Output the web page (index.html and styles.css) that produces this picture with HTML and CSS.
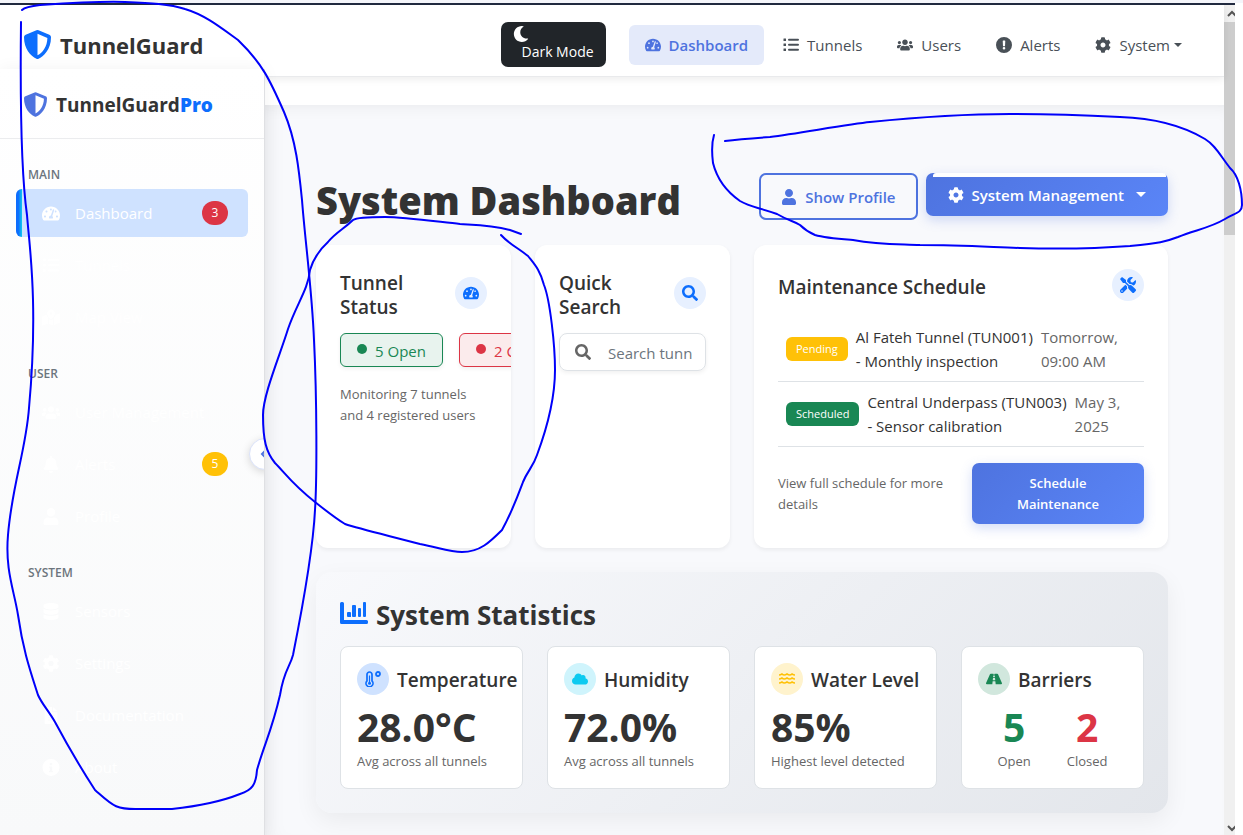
FILE: index.html
```html
<!DOCTYPE html>
<html lang="en">
<head>
<meta charset="utf-8">
<meta name="viewport" content="width=device-width, initial-scale=1">
<title>TunnelGuard</title>
<link rel="stylesheet" href="styles.css">
</head>
<body>
<svg class="sprite" aria-hidden="true">
  <symbol id="shield" viewBox="16 0 480 512"><path d="M466.500 83.700l-192-80a48.150 48.150 0 0 0-36.900 0l-192 80C27.700 91.100 16 108.600 16 128c0 198.500 114.500 335.700 221.500 380.300 11.800 4.900 25.100 4.900 36.900 0C360.100 472.600 496 349.300 496 128c0-19.400-11.700-36.900-29.500-44.300zM256.100 446.300l-.1-381 175.900 73.300c-3.300 151.400-82.100 261.100-175.800 307.700z"/></symbol>
  <symbol id="gauge" viewBox="0 0 576 512"><path d="M288 32C128.940 32 0 160.940 0 320c0 52.800 14.250 102.260 39.060 144.800 5.610 9.620 16.300 15.200 27.440 15.200h443c11.140 0 21.830-5.580 27.440-15.200C561.750 422.260 576 372.800 576 320c0-159.060-128.940-288-288-288zm0 64c14.710 0 26.580 10.130 30.320 23.650-1.110 2.260-2.640 4.230-3.450 6.670l-9.220 27.670c-5.130 3.490-10.970 6.010-17.640 6.010-17.670 0-32-14.330-32-32S270.330 96 288 96zM96 384c-17.670 0-32-14.330-32-32s14.330-32 32-32 32 14.330 32 32-14.330 32-32 32zm48-160c-17.670 0-32-14.330-32-32s14.330-32 32-32 32 14.330 32 32-14.330 32-32 32zm246.770-72.410l-61.330 184C343.130 347.330 352 364.540 352 384c0 11.720-3.380 22.550-8.880 32H232.880c-5.500-9.450-8.880-20.280-8.880-32 0-33.940 26.500-61.430 59.900-63.590l61.340-184.010c4.170-12.560 17.730-19.450 30.360-15.170 12.570 4.190 19.350 17.790 15.170 30.360zm14.660 57.200l15.520-46.550c3.470-1.290 7.130-2.230 11.050-2.230 17.670 0 32 14.330 32 32s-14.330 32-32 32c-11.380-.01-21.380-6.100-27.150-15.220zM480 384c-17.670 0-32-14.330-32-32s14.330-32 32-32 32 14.330 32 32-14.330 32-32 32z"/></symbol>
  <symbol id="list" viewBox="0 0 512 512"><path d="M24 48h64q8 0 8 8v64q0 8-8 8H24q-8 0-8-8V56q0-8 8-8zM24 208h64q8 0 8 8v64q0 8-8 8H24q-8 0-8-8v-64q0-8 8-8zM24 368h64q8 0 8 8v64q0 8-8 8H24q-8 0-8-8v-64q0-8 8-8zM192 56h288a32 32 0 0 1 0 64H192a32 32 0 0 1 0-64zM192 216h288a32 32 0 0 1 0 64H192a32 32 0 0 1 0-64zM192 376h288a32 32 0 0 1 0 64H192a32 32 0 0 1 0-64z"/></symbol>
  <symbol id="users" viewBox="0 0 640 512"><path d="M96 224c35.300 0 64-28.700 64-64s-28.700-64-64-64-64 28.700-64 64 28.700 64 64 64zm448 0c35.300 0 64-28.700 64-64s-28.700-64-64-64-64 28.700-64 64 28.700 64 64 64zm32 32h-64c-17.600 0-33.500 7.100-45.100 18.600 40.300 22.100 68.900 62 75.100 109.400h66c17.700 0 32-14.300 32-32v-32c0-35.300-28.700-64-64-64zm-256 0c61.900 0 112-50.100 112-112S381.900 32 320 32 208 82.100 208 144s50.100 112 112 112zm76.800 32h-8.300c-20.800 10-43.900 16-68.500 16s-47.600-6-68.500-16h-8.300C179.600 288 128 339.600 128 403.200V432c0 26.500 21.500 48 48 48h288c26.500 0 48-21.500 48-48v-28.800c0-63.600-51.600-115.200-115.200-115.200zm-223.700-13.400C161.500 263.100 145.600 256 128 256H64c-35.300 0-64 28.700-64 64v32c0 17.700 14.300 32 32 32h65.900c6.300-47.400 34.900-87.300 75.200-109.400z"/></symbol>
  <symbol id="alert" viewBox="0 0 512 512"><path fill-rule="evenodd" d="M256 0a256 256 0 1 0 0 512a256 256 0 0 0 0-512zM232 112h48q18 0 17 18l-8 146q-1 16-16 16h-34q-15 0-16-16l-8-146q-1-18 17-18zM256 318a42 42 0 1 1 0 84a42 42 0 0 1 0-84z"/></symbol>
  <symbol id="info" viewBox="0 0 512 512"><path fill-rule="evenodd" d="M256 0a256 256 0 1 0 0 512a256 256 0 0 0 0-512zM256 110a42 42 0 1 1 0 84a42 42 0 0 1 0-84zM204 224h88v136h28v40H192v-40h28v-96h-16z"/></symbol>
  <symbol id="gear" viewBox="0 0 512 512"><path d="M487.400 315.700l-42.600-24.600c4.300-23.200 4.300-47 0-70.200l42.600-24.600c4.900-2.800 7.100-8.600 5.500-14-11.100-35.600-30-67.800-54.700-94.600-3.800-4.100-10-5.100-14.800-2.300L380.800 110c-17.900-15.400-38.500-27.300-60.800-35.100V25.800c0-5.600-3.900-10.500-9.400-11.700-36.700-8.200-74.300-7.800-109.200 0-5.500 1.200-9.400 6.100-9.400 11.700V75c-22.200 7.900-42.800 19.800-60.800 35.100L88.700 85.500c-4.900-2.800-11-1.900-14.800 2.300-24.700 26.700-43.600 58.900-54.700 94.600-1.700 5.400.6 11.200 5.500 14L67.300 221c-4.300 23.200-4.300 47 0 70.200l-42.600 24.600c-4.900 2.800-7.100 8.600-5.500 14 11.100 35.600 30 67.800 54.700 94.600 3.800 4.100 10 5.100 14.800 2.300l42.600-24.600c17.900 15.400 38.500 27.300 60.800 35.100v49.200c0 5.600 3.900 10.500 9.400 11.700 36.700 8.200 74.300 7.800 109.200 0 5.500-1.200 9.400-6.100 9.400-11.700v-49.200c22.200-7.900 42.800-19.800 60.800-35.100l42.600 24.600c4.900 2.800 11 1.900 14.800-2.300 24.700-26.700 43.600-58.900 54.700-94.600 1.500-5.500-.7-11.300-5.600-14.100zM256 336c-44.100 0-80-35.900-80-80s35.900-80 80-80 80 35.900 80 80-35.900 80-80 80z"/></symbol>
  <symbol id="moon" viewBox="0 0 512 512"><path d="M283.211 512c78.962 0 151.079-35.925 198.857-94.792 7.068-8.708-.639-21.430-11.562-19.350-124.203 23.654-238.262-71.576-238.262-196.954 0-72.222 38.662-138.635 101.498-174.394 9.686-5.512 7.250-20.197-3.756-22.230A258.156 258.156 0 0 0 283.211 0c-141.309 0-256 114.511-256 256 0 141.309 114.511 256 256 256z"/></symbol>
  <symbol id="user" viewBox="0 0 448 512"><path d="M224 256c70.700 0 128-57.300 128-128S294.700 0 224 0 96 57.300 96 128s57.300 128 128 128zm89.600 32h-16.700c-22.200 10.200-46.900 16-72.900 16s-50.600-5.800-72.900-16h-16.700C60.200 288 0 348.200 0 422.400V464c0 26.500 21.500 48 48 48h352c26.500 0 48-21.500 48-48v-41.600c0-74.200-60.200-134.400-134.400-134.400z"/></symbol>
  <symbol id="search" viewBox="0 0 512 512"><path d="M505 442.700L405.300 343c-4.500-4.500-10.600-7-17-7H372c27.600-35.300 44-79.700 44-128C416 93.100 322.900 0 208 0S0 93.100 0 208s93.100 208 208 208c48.300 0 92.700-16.400 128-44v16.300c0 6.400 2.500 12.500 7 17l99.700 99.700c9.400 9.400 24.600 9.400 33.900 0l28.300-28.300c9.400-9.400 9.400-24.600.1-34zM208 336c-70.700 0-128-57.200-128-128 0-70.700 57.200-128 128-128 70.700 0 128 57.200 128 128 0 70.700-57.200 128-128 128z"/></symbol>
  <symbol id="tools" viewBox="0 0 512 512"><path d="M501.100 395.700L384 278.600c-23.100-23.100-57.600-27.600-85.400-13.900L192 158.100V96L64 0 0 64l96 128h62.100l106.600 106.600c-13.600 27.800-9.200 62.300 13.900 85.400l117.100 117.100c14.600 14.600 38.200 14.600 52.700 0l52.700-52.700c14.500-14.600 14.500-38.200 0-52.700zM331.700 225c28.300 0 54.900 11 74.900 31l19.400 19.400c15.800-6.900 30.800-16.500 43.800-29.500 37.100-37.100 49.700-89.300 37.900-136.700-2.200-9-13.500-12.100-20.100-5.500l-74.400 74.400-67.900-11.300L334 98.900l74.400-74.400c6.600-6.600 3.400-17.900-5.700-20.200-47.400-11.700-99.600.9-136.600 37.900-28.500 28.500-41.900 66.100-41.200 103.600l82.100 82.100c8.100-1.900 16.500-2.900 24.700-2.900zm-103.900 82l-56.700-56.700L18.700 402.800c-25 25-25 65.500 0 90.500s65.500 25 90.500 0l123.600-123.600c-7.600-19.900-9.900-41.600-5-62.700zM64 472c-13.200 0-24-10.800-24-24 0-13.300 10.700-24 24-24s24 10.700 24 24c0 13.200-10.700 24-24 24z"/></symbol>
  <symbol id="map" viewBox="0 0 576 512"><path fill-rule="evenodd" d="M288 0c-70 0-126 56-126 126 0 56 82 158 113 190a18 18 0 0 0 26 0c31-32 113-134 113-190C414 56 358 0 288 0zm0 84a42 42 0 1 1 0 84a42 42 0 0 1 0-84zM20 216L144 166q20 60 48 100v188L20 510Q0 514 0 494V244q0-20 20-28zM224 310q64 70 128 0v202L224 464zM384 268q40-60 50-90l122-48q20-6 20 16v252q0 18-16 26L384 494z"/></symbol>
  <symbol id="bell" viewBox="0 0 448 512"><path d="M224 512c35.320 0 63.970-28.650 63.970-64H160.030c0 35.350 28.650 64 63.970 64zm215.390-149.710c-19.320-20.760-55.470-51.990-55.470-154.290 0-77.700-54.480-139.900-127.940-155.160V32c0-17.670-14.320-32-31.980-32s-31.980 14.330-31.980 32v20.840C118.560 68.100 64.080 130.300 64.080 208c0 102.300-36.150 133.530-55.470 154.290-6 6.450-8.660 14.160-8.610 21.710.11 16.400 12.980 32 32.100 32h383.800c19.120 0 32-15.600 32.100-32 .05-7.550-2.610-15.270-8.610-21.710z"/></symbol>
  <symbol id="database" viewBox="0 0 448 512"><path d="M448 73.143v45.714C448 159.143 347.667 192 224 192S0 159.143 0 118.857V73.143C0 32.857 100.333 0 224 0s224 32.857 224 73.143zM448 176v102.857C448 319.143 347.667 352 224 352S0 319.143 0 278.857V176c48.125 33.143 136.208 48.572 224 48.572S399.874 209.143 448 176zm0 160v102.857C448 479.143 347.667 512 224 512S0 479.143 0 438.857V336c48.125 33.143 136.208 48.572 224 48.572S399.874 369.143 448 336z"/></symbol>
  <symbol id="file" viewBox="0 0 384 512"><path fill-rule="evenodd" d="M24 0h200v136q0 24 24 24h136v328q0 24-24 24H24q-24 0-24-24V24Q0 0 24 0zM256 0l128 128H256zM96 240v30h192v-30zM96 310v30h192v-30zM96 380v30h192v-30z"/></symbol>
  <symbol id="chart" viewBox="0 0 28 22"><path d="M0 1.500Q0 0 1.500 0h1Q4 0 4 1.500V18h22.500q1.500 0 1.500 1.500v1q0 1.500-1.500 1.500h-25Q0 22 0 20.500zM7 11q0-1 1-1h2q1 0 1 1v4H8q-1 0-1-1zM12 4q0-1 1-1h2q1 0 1 1v10q0 1-1 1h-2q-1 0-1-1zM18 7q0-1 1-1h1q1 0 1 1v7q0 1-1 1h-1q-1 0-1-1zM23 1q0-1 1-1h1q1 0 1 1v13q0 1-1 1h-1q-1 0-1-1z"/></symbol>
  <symbol id="thermo" viewBox="0 0 16 16"><path fill="none" stroke="currentColor" stroke-width="1.700" d="M2 3.500a2.500 2.500 0 0 1 5 0v6.300a3.500 3.500 0 1 1-5 0z"/><path fill="none" stroke="currentColor" stroke-width="1.200" d="M4.500 4.500v7"/><circle cx="4.500" cy="12.200" r="1.500"/><circle cx="13" cy="3" r="2" fill="none" stroke="currentColor" stroke-width="1.800"/></symbol>
  <symbol id="cloud" viewBox="0 0 640 512"><path d="M537.600 226.600c4.100-10.700 6.400-22.400 6.400-34.600 0-53-43-96-96-96-19.700 0-38.100 6-53.300 16.200C367 64.200 315.300 32 256 32c-88.400 0-160 71.600-160 160 0 2.700.1 5.400.2 8.100C40.200 219.800 0 273.200 0 336c0 79.500 64.500 144 144 144h368c70.700 0 128-57.300 128-128 0-61.900-44-113.600-102.400-125.400z"/></symbol>
  <symbol id="water" viewBox="0 0 16 12"><path fill="none" stroke="currentColor" stroke-width="1.600" d="M0 2q1.500 0 3-1q2 2 5 0q3 2 5 0q1.500 1 3 1M0 6q1.500 0 3-1q2 2 5 0q3 2 5 0q1.500 1 3 1M0 10q1.500 0 3-1q2 2 5 0q3 2 5 0q1.500 1 3 1"/></symbol>
  <symbol id="road" viewBox="0 0 576 512"><path d="M573.190 402.670l-139.790-320C428.430 71.290 417.600 64 405.680 64h-97.590l2.450 23.160c.5 4.720-3.210 8.840-7.960 8.840h-29.160c-4.750 0-8.460-4.120-7.960-8.840L267.910 64h-97.590c-11.930 0-22.760 7.290-27.730 18.670L2.800 402.670C-6.450 423.860 8.310 448 30.540 448h196.840l10.310-97.680c.86-8.140 7.720-14.320 15.910-14.320h68.800c8.190 0 15.050 6.180 15.910 14.320L348.620 448h196.840c22.230 0 36.990-24.140 27.730-45.330zM260.400 135.160a8 8 0 0 1 7.960-7.160h39.290c4.090 0 7.530 3.090 7.960 7.160l4.600 43.580c.75 7.090-4.810 13.260-11.930 13.260h-40.540c-7.130 0-12.680-6.170-11.930-13.260l4.590-43.580zM315.640 304h-55.290c-9.500 0-16.910-8.230-15.910-17.680l5.070-48c.86-8.140 7.720-14.320 15.910-14.320h45.150c8.190 0 15.050 6.180 15.910 14.320l5.070 48c1 9.450-6.410 17.680-15.910 17.680z"/></symbol>
</svg>

<div class="window">
  <div class="app">
    <header class="topbar">
      <a class="brand" href="#"><svg class="brand-icon"><use href="#shield"/></svg>TunnelGuard</a>
      <div class="topbar-end">
        <button class="dark-mode" type="button"><svg class="icon"><use href="#moon"/></svg><span>Dark Mode</span></button>
        <nav class="topnav" aria-label="Primary">
          <a class="topnav-link active" href="#"><svg class="icon"><use href="#gauge"/></svg>Dashboard</a>
          <a class="topnav-link" href="#"><svg class="icon"><use href="#list"/></svg>Tunnels</a>
          <a class="topnav-link" href="#"><svg class="icon"><use href="#users"/></svg>Users</a>
          <a class="topnav-link" href="#"><svg class="icon"><use href="#alert"/></svg>Alerts</a>
          <a class="topnav-link" href="#"><svg class="icon"><use href="#gear"/></svg><span class="with-caret">System</span></a>
        </nav>
      </div>
    </header>

    <div class="body">
      <aside class="sidebar">
        <a class="side-brand" href="#"><svg class="side-brand-icon"><use href="#shield"/></svg><span>TunnelGuard<b>Pro</b></span></a>
        <nav class="side-nav" aria-label="Sidebar">
          <section>
            <h2 class="side-label">MAIN</h2>
            <a class="side-link current" href="#"><svg class="side-icon"><use href="#gauge"/></svg>Dashboard<span class="pill red">3</span></a>
            <a class="side-link" href="#"><svg class="side-icon"><use href="#list"/></svg>Tunnels</a>
            <a class="side-link" href="#"><svg class="side-icon"><use href="#map"/></svg>Map View</a>
          </section>
          <section>
            <h2 class="side-label">USER</h2>
            <a class="side-link" href="#"><svg class="side-icon"><use href="#users"/></svg>User Management</a>
            <a class="side-link" href="#"><svg class="side-icon"><use href="#bell"/></svg>Alerts<span class="pill amber">5</span></a>
            <a class="side-link" href="#"><svg class="side-icon"><use href="#user"/></svg>Profile</a>
          </section>
          <section>
            <h2 class="side-label">SYSTEM</h2>
            <a class="side-link" href="#"><svg class="side-icon"><use href="#database"/></svg>Sensors</a>
            <a class="side-link" href="#"><svg class="side-icon"><use href="#gear"/></svg>Settings</a>
            <a class="side-link" href="#"><svg class="side-icon"><use href="#file"/></svg>Documentation</a>
            <a class="side-link" href="#"><svg class="side-icon"><use href="#info"/></svg>About</a>
          </section>
        </nav>
        <div class="collapse-clip"><button class="collapse" type="button" aria-label="Collapse sidebar"><svg viewBox="0 0 8 12"><path d="M6 2L2 6l4 4"/></svg></button></div>
      </aside>

      <main class="main">
        <div class="page-head">
          <h1>System Dashboard</h1>
          <div class="actions">
            <button class="btn outline" type="button"><svg class="icon"><use href="#user"/></svg>Show Profile</button>
            <div class="dropdown">
              <button class="btn solid" type="button"><svg class="icon"><use href="#gear"/></svg><span class="with-caret">System Management</span></button>
              <div class="menu-edge"></div>
            </div>
          </div>
        </div>

        <div class="cards">
          <section class="card">
            <div class="card-head"><h3>Tunnel Status</h3><span class="round blue"><svg class="icon"><use href="#gauge"/></svg></span></div>
            <div class="states">
              <span class="state open"><i class="dot"></i>5 Open</span>
              <span class="state closed"><i class="dot"></i>2 Closed</span>
            </div>
            <p class="note">Monitoring 7 tunnels and 4 registered users</p>
          </section>

          <section class="card">
            <div class="card-head"><h3>Quick Search</h3><span class="round blue"><svg class="icon"><use href="#search"/></svg></span></div>
            <label class="search"><svg class="icon"><use href="#search"/></svg><input type="text" placeholder="Search tunnels..." aria-label="Search tunnels"></label>
          </section>

          <section class="card wide">
            <div class="card-head"><h3>Maintenance Schedule</h3><span class="round blue"><svg class="icon"><use href="#tools"/></svg></span></div>
            <ul class="schedule">
              <li><span class="tag amber">Pending</span><span>Al Fateh Tunnel (TUN001)<br>- Monthly inspection</span><time>Tomorrow,<br>09:00 AM</time></li>
              <li><span class="tag green">Scheduled</span><span>Central Underpass (TUN003)<br>- Sensor calibration</span><time>May 3,<br>2025</time></li>
            </ul>
            <div class="schedule-foot">
              <p>View full schedule for more details</p>
              <button class="btn solid small" type="button">Schedule Maintenance</button>
            </div>
          </section>
        </div>

        <section class="stats">
          <h2><svg class="chart-icon"><use href="#chart"/></svg>System Statistics</h2>
          <div class="tiles">
            <article class="tile">
              <div class="tile-head"><span class="round temp"><svg class="icon"><use href="#thermo"/></svg></span><h3>Temperature</h3></div>
              <p class="value">28.0°C</p><p class="caption">Avg across all tunnels</p>
            </article>
            <article class="tile">
              <div class="tile-head"><span class="round cyan"><svg class="icon"><use href="#cloud"/></svg></span><h3>Humidity</h3></div>
              <p class="value">72.0%</p><p class="caption">Avg across all tunnels</p>
            </article>
            <article class="tile">
              <div class="tile-head"><span class="round yellow"><svg class="icon"><use href="#water"/></svg></span><h3>Water Level</h3></div>
              <p class="value">85%</p><p class="caption">Highest level detected</p>
            </article>
            <article class="tile">
              <div class="tile-head"><span class="round green"><svg class="icon"><use href="#road"/></svg></span><h3>Barriers</h3></div>
              <div class="split">
                <div><p class="value good">5</p><p class="caption">Open</p></div>
                <div><p class="value bad">2</p><p class="caption">Closed</p></div>
              </div>
            </article>
          </div>
        </section>
      </main>
    </div>
  </div>

  <div class="scrollbar" aria-hidden="true">
    <svg class="arrow" viewBox="0 0 11 17"><path d="M4 11l4-4 4 4"/></svg>
    <div class="thumb"></div>
    <svg class="arrow end" viewBox="0 0 11 17"><path d="M4 7l4 4 4-4"/></svg>
  </div>
</div>

<svg class="ink" width="1243" height="835" viewBox="0 0 1243 835" aria-hidden="true">
  <path d="M22 10C25 7 31 6 40 5C70 3 100 1 125 2C150 3 170 4 185 9C205 15 220 27 238 40C262 63 270 80 284 112C296 140 299 170 302 200C305 240 312 290 314 340C317 400 317 480 315 510C313 550 300 620 293 655C290 667 284 670 280 695C272 730 264 745 257 770C256 785 252 790 240 794C220 802 200 806 172 809H140C115 810 112 805 95 790C82 770 70 750 55 722C48 710 42 704 38 695C30 670 23 650 18 615C14 590 5 570 8 535C12 485 26 450 29 408C32 375 34 340 33 300C32 260 29 240 27 215C22 180 20 110 21 22"/>
  <path d="M521 234L510 230C490 225 475 225 460 224C440 222 405 217 385 217C365 217 356 218 353 220C345 228 335 233 328 242C318 251 313 260 310 270C308 290 297 303 288 329C280 355 263 395 263 415C263 440 266 452 275 463C285 473 292 484 315 502C325 510 335 518 345 524C360 529 390 536 420 544C440 548 450 552 462 552C480 552 490 542 502 530C512 512 520 490 523 482C528 470 533 467 537 455C550 420 555 390 555 370C555 345 550 300 544 285C540 270 535 265 528 256C518 248 508 243 501 235"/>
  <path d="M714 135C711 145 712 155 713 163C718 183 730 194 740 201C750 207 757 207 777 214C789 221 794 221 800 225C805 230 808 232 815 235C825 238 840 239 853 240C880 245 900 244 920 245C960 245 990 247 1020 248C1055 249 1090 249 1130 246C1160 243 1165 242 1178 237C1195 230 1210 228 1225 219C1235 213 1242 213 1242 205C1242 190 1238 175 1230 168C1220 155 1215 145 1205 139C1180 124 1150 118 1120 117C1080 115 1040 114 1010 114C960 114 900 119 870 122C850 124 800 133 770 137C755 138 740 139 725 141"/>
</svg>
</body>
</html>
```

FILE: styles.css
```css
* { box-sizing: border-box; }

body {
  margin: 0;
  border-top: 3px solid #f4f5fa;
  background: #fff;
  color: #333;
  font: 15px/24px "Open Sans", "Noto Sans", sans-serif;
  overflow-x: hidden;
}

h1, h2, h3, p, ul { margin: 0; padding: 0; }
a { color: inherit; text-decoration: none; }
button, input { font: inherit; }
svg { display: block; flex: none; fill: currentColor; }

.sprite { display: none; }
.icon { width: 16px; height: 16px; }

.window {
  display: flex;
  min-height: calc(100vh - 3px);
  margin-right: 8px;
  border-top: 2px solid #212a40;
}
.app {
  flex: 1;
  min-width: 0;
  display: flex;
  flex-direction: column;
}

/* Top bar */
.topbar {
  position: relative;
  z-index: 1;
  display: flex;
  align-items: center;
  justify-content: space-between;
  height: 72px;
  padding: 12px 26px 4px 24px;
  background: #fff;
  border-bottom: 1px solid #e9eaec;
  box-shadow: 0 2px 8px rgba(0, 0, 0, .08);
}
.brand {
  display: flex;
  align-items: center;
  gap: 9px;
  font-size: 22px;
  font-weight: 700;
}
.brand-icon { width: 27px; height: 29px; color: #0d6efd; }
.topbar-end { display: flex; align-items: center; gap: 23px; }
.dark-mode {
  display: flex;
  flex-direction: column;
  height: 45px;
  padding: 4px 12px 4px 12px;
  border: 0;
  border-radius: 7px;
  background: #212529;
  color: #fff;
  font-size: 14px;
  line-height: 20px;
}
.dark-mode span { padding-left: 8px; }
.topnav { display: flex; gap: 3px; }
.topnav-link {
  display: flex;
  align-items: center;
  gap: 8px;
  padding: 8px 16px;
  border-radius: 6px;
  color: #495057;
}
.topnav-link.active { background: #e4eafa; color: #4e73df; font-weight: 600; }
.with-caret { display: flex; align-items: center; gap: 4px; }
.with-caret::after {
  content: "";
  border: 4px solid transparent;
  border-top-color: currentColor;
  border-bottom: 0;
}

/* Sidebar */
.body { flex: 1; display: flex; }
.sidebar {
  position: relative;
  z-index: 2;
  flex: none;
  width: 265px;
  margin-top: -8px;
  background: linear-gradient(#fff, #f8f9fa);
  border-right: 1px solid #dfe0e3;
  box-shadow: 0 0 16px rgba(0, 0, 0, .05);
}
.side-brand {
  display: flex;
  align-items: center;
  gap: 9px;
  height: 70px;
  padding: 2px 0 0 24px;
  border-bottom: 1px solid #ebecee;
  font-size: 19px;
  font-weight: 700;
}
.side-brand b { color: #0d6efd; }
.side-brand-icon { width: 23px; height: 25px; color: #4e73df; }
.side-nav {
  display: grid;
  gap: 17px;
  padding: 24px 16px 16px;
}
.side-label {
  padding: 3px 12px 5px;
  color: #6c757d;
  font-size: 12px;
  font-weight: 600;
  line-height: 18px;
}
.side-link {
  position: relative;
  display: flex;
  align-items: center;
  gap: 15px;
  height: 48px;
  margin-bottom: 4px;
  padding: 0 20px 0 26px;
  overflow: hidden;
  border-radius: 6px;
  color: #fff;
}
.side-link.current { background: #cfe2ff; }
.side-link.current::before {
  content: "";
  position: absolute;
  inset: 0 auto 0 0;
  width: 6px;
  background: linear-gradient(90deg, #0d6efd 40%, #0dcaf0);
}
.side-icon { width: 18px; height: 17px; }
.pill {
  margin-left: auto;
  width: 26px;
  border-radius: 12px;
  font-size: 12px;
  text-align: center;
}
.pill.red { background: #dc3545; }
.pill.amber { background: #ffc107; }
.collapse-clip {
  position: absolute;
  top: 361px;
  right: 0;
  width: 32px;
  height: 50px;
  padding: 8px 0 0 17px;
  overflow: hidden;
}
.collapse {
  width: 32px;
  height: 32px;
  padding: 0 0 0 10px;
  border: 1px solid #dbe3fa;
  border-radius: 50%;
  background: #fff;
  color: #4e73df;
  box-shadow: 0 2px 8px rgba(0, 0, 0, .15);
}
.collapse svg { width: 8px; height: 12px; fill: none; stroke: currentColor; stroke-width: 2; }

/* Main column */
.main {
  flex: 1;
  min-width: 0;
  padding: 65px 56px 23px 51px;
  border-top: 28px solid #fff;
  background: #f8f9fc;
  box-shadow: inset 0 12px 16px -10px rgba(0, 0, 0, .06), inset 16px 0 20px -12px rgba(0, 0, 0, .05);
}
.page-head {
  display: flex;
  justify-content: space-between;
  align-items: flex-start;
  height: 75px;
}
h1 {
  font-size: 38px;
  font-weight: 800;
  line-height: 60px;
  white-space: nowrap;
}
.actions { display: flex; align-items: flex-start; gap: 8px; padding-top: 3px; }
.btn {
  display: flex;
  align-items: center;
  justify-content: center;
  gap: 8px;
  border-radius: 7px;
  font-weight: 600;
}
.btn.outline {
  height: 47px;
  padding: 0 20px;
  border: 2px solid #4e73df;
  background: transparent;
  color: #4e73df;
}
.btn.solid {
  height: 43px;
  padding: 0 22px;
  border: 0;
  background: linear-gradient(135deg, #4e73df, #5a85f7);
  color: #fff;
  box-shadow: 0 4px 12px rgba(78, 115, 223, .25);
}
.btn .with-caret { gap: 12px; }
.btn .with-caret::after { border-width: 5px; border-bottom: 0; }
.btn.solid.small {
  width: 172px;
  height: 61px;
  padding: 0 24px;
  font-size: 13px;
  line-height: 21px;
}
.dropdown { position: relative; }
.menu-edge {
  position: absolute;
  inset: 0 2px auto 7px;
  height: 4px;
  border-radius: 3px 3px 0 0;
  background: #fff;
}

/* Summary cards */
.cards, .tiles {
  display: grid;
  grid-template-columns: repeat(4, minmax(0, 1fr));
  gap: 24px;
}
.card {
  min-height: 303px;
  padding: 24px;
  overflow: hidden;
  border-radius: 12px;
  background: #fff;
  box-shadow: 0 2px 4px rgba(0, 0, 0, .06);
}
.card.wide { grid-column: span 2; }
h3 { font-size: 19px; font-weight: 600; line-height: 24px; }
.card-head {
  display: flex;
  justify-content: space-between;
  gap: 16px;
  margin-bottom: 14px;
}
.card-head h3 { padding-top: 2px; }
.card-head .round { margin-top: 8px; }
.wide .card-head { margin-bottom: 16px; }
.wide .card-head h3 { padding-top: 6px; }
.wide .card-head .round { margin-top: 0; }
.round {
  flex: none;
  display: grid;
  place-items: center;
  width: 32px;
  height: 32px;
  border-radius: 50%;
}
.round.blue { background: #e7f0ff; color: #0d6efd; }
.round.temp { background: #cfe2ff; color: #0d6efd; }
.round.cyan { background: #cff4fc; color: #0dcaf0; }
.round.yellow { background: #fff3cd; color: #ffc107; }
.round.green { background: #d1e7dd; color: #198754; }
.states { display: flex; gap: 16px; margin-bottom: 17px; }
.state {
  flex: none;
  display: flex;
  align-items: center;
  gap: 8px;
  height: 34px;
  padding: 2px 16px 0;
  border: 1px solid currentColor;
  border-radius: 6px;
  box-shadow: 0 2px 4px rgba(0, 0, 0, .06);
}
.state.open { background: #e8f3ee; color: #198754; }
.state.closed { background: #fbebec; color: #dc3545; }
.dot { width: 10px; height: 10px; margin-bottom: 4px; border-radius: 50%; background: currentColor; }
.note, .schedule-foot p, .caption { color: #666; font-size: 13px; line-height: 21px; }
.search {
  display: flex;
  align-items: center;
  gap: 17px;
  height: 38px;
  padding: 0 13px 0 15px;
  border: 1px solid #dee2e6;
  border-radius: 8px;
  color: #666;
  box-shadow: 0 2px 4px rgba(0, 0, 0, .06);
}
.search input {
  flex: 1;
  min-width: 0;
  padding: 2px 0 0;
  border: 0;
  background: none;
}
.search input::placeholder { color: #6c757d; }

/* Maintenance schedule */
.schedule { list-style: none; }
.schedule li {
  display: flex;
  align-items: center;
  gap: 8px;
  padding: 8px;
  border-bottom: 1px solid #dee2e6;
  white-space: nowrap;
}
.schedule time { color: #666; }
.tag {
  padding: 0 10px;
  border-radius: 6px;
  color: #fff;
  font-size: 11px;
}
.tag.amber { background: #ffc107; }
.tag.green { background: #198754; }
.schedule-foot {
  display: flex;
  align-items: center;
  gap: 8px;
  margin-top: 16px;
}
.schedule-foot p { flex: 1; }

/* Statistics */
.stats {
  margin-top: 24px;
  padding: 24px;
  border-radius: 16px;
  background: linear-gradient(135deg, #f8f9fc, #e3e6eb);
  box-shadow: 0 8px 24px rgba(0, 0, 0, .06);
}
.stats h2 {
  display: flex;
  align-items: center;
  gap: 8px;
  margin-bottom: 12px;
  font-size: 26px;
  font-weight: 700;
  line-height: 38px;
}
.chart-icon { width: 28px; height: 22px; margin-bottom: 4px; color: #0d6efd; }
.tile {
  padding: 16px;
  border: 1px solid #dee2e6;
  border-radius: 8px;
  background: #fff;
}
.tile-head { display: flex; align-items: center; gap: 8px; margin-bottom: 8px; }
.tile-head h3 { padding-top: 2px; }
.value { font-size: 39px; font-weight: 700; line-height: 48px; }
.value.good { color: #198754; }
.value.bad { color: #dc3545; }
.split { display: flex; justify-content: center; gap: 36px; text-align: center; }

/* Window scrollbar */
.scrollbar {
  flex: none;
  display: flex;
  flex-direction: column;
  width: 11px;
  overflow: hidden;
  background: #f0f0f0;
}
.arrow { width: 11px; height: 17px; fill: none; stroke: #555; stroke-width: 2; }
.arrow.end { margin-top: auto; }
.thumb { height: 213px; background: #cdcdcd; }

/* Pen marks over the page */
.ink {
  position: absolute;
  top: 0;
  left: 0;
  fill: none;
  stroke: #0000fa;
  stroke-width: 2;
  stroke-linecap: round;
  pointer-events: none;
  z-index: 5;
}
```
